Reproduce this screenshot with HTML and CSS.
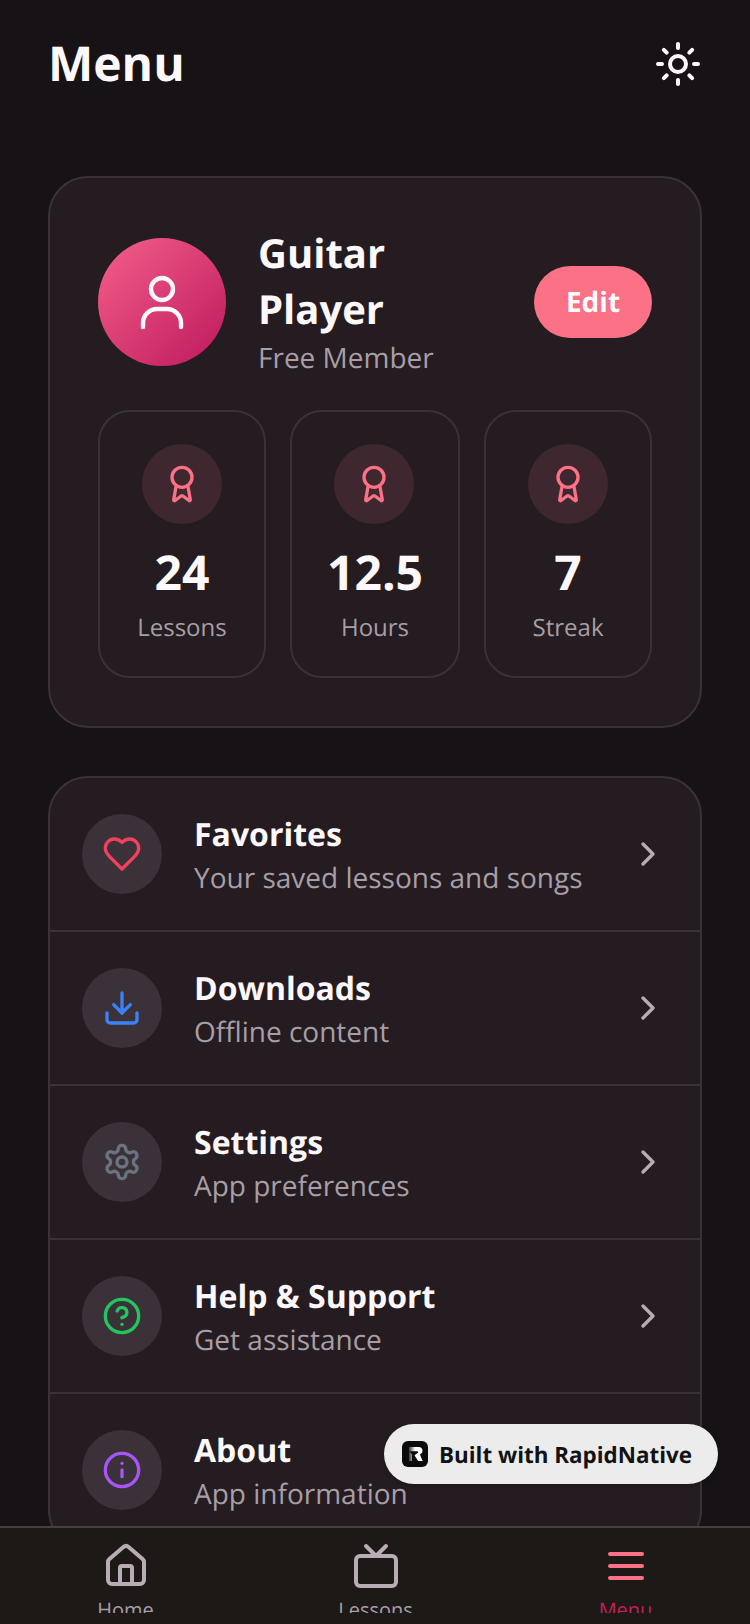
FILE: index.html
```html
<!DOCTYPE html>
<html lang="en">
<head>
<meta charset="utf-8">
<title>Menu</title>
<link rel="stylesheet" href="styles.css">
</head>
<body>
<div class="app">
  <main class="content">
    <header class="header">
      <h1 class="title">Menu</h1>
      <svg class="icon icon-48 white" viewBox="0 0 24 24"><circle cx="12" cy="12" r="4"/><path d="M12 2v2"/><path d="M12 20v2"/><path d="m4.93 4.93 1.41 1.41"/><path d="m17.66 17.66 1.41 1.41"/><path d="M2 12h2"/><path d="M20 12h2"/><path d="m6.34 17.66-1.41 1.41"/><path d="m19.07 4.93-1.41 1.41"/></svg>
    </header>

    <section class="card profile">
      <div class="profile-top">
        <div class="avatar">
          <svg class="avatar-icon" viewBox="0 0 56 56"><circle cx="28" cy="15" r="11"/><path d="M9 53v-4a14 14 0 0 1 14-14h10a14 14 0 0 1 14 14v4"/></svg>
        </div>
        <div class="who">
          <div class="name">Guitar Player</div>
          <div class="plan">Free Member</div>
        </div>
        <div class="edit">Edit</div>
      </div>
      <div class="stats">
        <div class="stat">
          <div class="stat-circle"><svg class="icon icon-40 pink" viewBox="0 0 24 24"><path d="m15.477 12.89 1.515 8.526a.5.5 0 0 1-.81.47l-3.58-2.687a1 1 0 0 0-1.197 0l-3.586 2.686a.5.5 0 0 1-.81-.469l1.514-8.526"/><circle cx="12" cy="8" r="6"/></svg></div>
          <div class="stat-num">24</div>
          <div class="stat-label">Lessons</div>
        </div>
        <div class="stat stat-wide">
          <div class="stat-circle"><svg class="icon icon-40 pink" viewBox="0 0 24 24"><path d="m15.477 12.89 1.515 8.526a.5.5 0 0 1-.81.47l-3.58-2.687a1 1 0 0 0-1.197 0l-3.586 2.686a.5.5 0 0 1-.81-.469l1.514-8.526"/><circle cx="12" cy="8" r="6"/></svg></div>
          <div class="stat-num">12.5</div>
          <div class="stat-label">Hours</div>
        </div>
        <div class="stat">
          <div class="stat-circle"><svg class="icon icon-40 pink" viewBox="0 0 24 24"><path d="m15.477 12.89 1.515 8.526a.5.5 0 0 1-.81.47l-3.58-2.687a1 1 0 0 0-1.197 0l-3.586 2.686a.5.5 0 0 1-.81-.469l1.514-8.526"/><circle cx="12" cy="8" r="6"/></svg></div>
          <div class="stat-num">7</div>
          <div class="stat-label">Streak</div>
        </div>
      </div>
    </section>

    <section class="card list">
      <div class="row">
        <div class="row-circle"><svg class="icon icon-40 rose" viewBox="0 0 24 24"><path d="M19 14c1.49-1.46 3-3.21 3-5.5A5.5 5.5 0 0 0 16.5 3c-1.76 0-3 .5-4.5 2-1.5-1.5-2.74-2-4.5-2A5.5 5.5 0 0 0 2 8.5c0 2.3 1.5 4.05 3 5.5l7 7Z"/></svg></div>
        <div class="row-text"><div class="row-title">Favorites</div><div class="row-sub">Your saved lessons and songs</div></div>
        <svg class="icon icon-40 muted" viewBox="0 0 24 24"><path d="m9 18 6-6-6-6"/></svg>
      </div>
      <div class="row">
        <div class="row-circle"><svg class="icon icon-40 blue" viewBox="0 0 24 24"><path d="M21 15v4a2 2 0 0 1-2 2H5a2 2 0 0 1-2-2v-4"/><path d="m7 10 5 5 5-5"/><path d="M12 15V3"/></svg></div>
        <div class="row-text"><div class="row-title">Downloads</div><div class="row-sub">Offline content</div></div>
        <svg class="icon icon-40 muted" viewBox="0 0 24 24"><path d="m9 18 6-6-6-6"/></svg>
      </div>
      <div class="row">
        <div class="row-circle"><svg class="icon icon-40 gray" viewBox="0 0 24 24"><path d="M12.22 2h-.44a2 2 0 0 0-2 2v.18a2 2 0 0 1-1 1.73l-.43.25a2 2 0 0 1-2 0l-.15-.08a2 2 0 0 0-2.73.73l-.22.38a2 2 0 0 0 .73 2.73l.15.1a2 2 0 0 1 1 1.72v.51a2 2 0 0 1-1 1.74l-.15.09a2 2 0 0 0-.73 2.73l.22.38a2 2 0 0 0 2.73.73l.15-.08a2 2 0 0 1 2 0l.43.25a2 2 0 0 1 1 1.73V20a2 2 0 0 0 2 2h.44a2 2 0 0 0 2-2v-.18a2 2 0 0 1 1-1.73l.43-.25a2 2 0 0 1 2 0l.15.08a2 2 0 0 0 2.73-.73l.22-.39a2 2 0 0 0-.73-2.73l-.15-.08a2 2 0 0 1-1-1.74v-.5a2 2 0 0 1 1-1.74l.15-.09a2 2 0 0 0 .73-2.73l-.22-.38a2 2 0 0 0-2.73-.73l-.15.08a2 2 0 0 1-2 0l-.43-.25a2 2 0 0 1-1-1.73V4a2 2 0 0 0-2-2z"/><circle cx="12" cy="12" r="3"/></svg></div>
        <div class="row-text"><div class="row-title">Settings</div><div class="row-sub">App preferences</div></div>
        <svg class="icon icon-40 muted" viewBox="0 0 24 24"><path d="m9 18 6-6-6-6"/></svg>
      </div>
      <div class="row">
        <div class="row-circle"><svg class="icon icon-40 green" viewBox="0 0 24 24"><circle cx="12" cy="12" r="10"/><path d="M9.09 9a3 3 0 0 1 5.83 1c0 2-3 3-3 3"/><path d="M12 17h.01"/></svg></div>
        <div class="row-text"><div class="row-title">Help &amp; Support</div><div class="row-sub">Get assistance</div></div>
        <svg class="icon icon-40 muted" viewBox="0 0 24 24"><path d="m9 18 6-6-6-6"/></svg>
      </div>
      <div class="row">
        <div class="row-circle"><svg class="icon icon-40 purple" viewBox="0 0 24 24"><circle cx="12" cy="12" r="10"/><path d="M12 16v-4"/><path d="M12 8h.01"/></svg></div>
        <div class="row-text"><div class="row-title">About</div><div class="row-sub">App information</div></div>
        <svg class="icon icon-40 muted" viewBox="0 0 24 24"><path d="m9 18 6-6-6-6"/></svg>
      </div>
    </section>
  </main>

  <nav class="tabs">
    <div class="tab">
      <svg class="icon icon-48 muted" viewBox="0 0 24 24"><path d="M15 21v-8a1 1 0 0 0-1-1h-4a1 1 0 0 0-1 1v8"/><path d="M3 10a2 2 0 0 1 .709-1.528l7-5.999a2 2 0 0 1 2.582 0l7 5.999A2 2 0 0 1 21 10v9a2 2 0 0 1-2 2H5a2 2 0 0 1-2-2z"/></svg>
      <div class="tab-label">Home</div>
    </div>
    <div class="tab">
      <svg class="icon icon-48 muted" viewBox="0 0 24 24"><rect x="2" y="7" width="20" height="15" rx="2"/><path d="m17 2-5 5-5-5"/></svg>
      <div class="tab-label">Lessons</div>
    </div>
    <div class="tab">
      <svg class="icon icon-48 pink" viewBox="0 0 24 24"><path d="M4 6h16"/><path d="M4 12h16"/><path d="M4 18h16"/></svg>
      <div class="tab-label active">Menu</div>
    </div>
  </nav>

  <div class="badge">
    <svg class="badge-logo" viewBox="0 0 26 26">
      <defs><linearGradient id="logo-fade" x1="0" y1="0" x2="1" y2="0"><stop offset="0" stop-color="#3a3a3c"/><stop offset="0.45" stop-color="#fff"/></linearGradient></defs>
      <rect width="26" height="26" rx="6" fill="#0b0b0c"/>
      <path d="M7 6h9.5c2.6 0 4 1.6 4 3.8 0 1.8-1 3-2.6 3.6l2.8 6.6h-4.6l-3.6-5.8 3.2-2.2c.8-.6.6-1.8-.6-1.8H7l3 3v6.8H7z" fill="url(#logo-fade)"/>
    </svg>
    <span class="badge-text">Built with RapidNative</span>
  </div>
</div>
</body>
</html>
```

FILE: styles.css
```css
* {
  box-sizing: border-box;
}

html,
body {
  margin: 0;
  padding: 0;
}

body {
  font-family: "Open Sans", "Noto Sans", sans-serif;
  background: #171216;
  color: #fff;
  text-rendering: geometricPrecision;
}

.app {
  position: relative;
  width: 750px;
  height: 1624px;
  display: flex;
  flex-direction: column;
  overflow: hidden;
}

.content {
  flex: 1;
  min-height: 0;
  overflow: hidden;
  padding: 0 48px;
}

.header {
  height: 128px;
  display: flex;
  justify-content: space-between;
  align-items: center;
}

.title {
  margin: 0;
  font-size: 48px;
  line-height: 64px;
  font-weight: 700;
  color: #fdf8fb;
}

.icon {
  display: block;
  flex: none;
  fill: none;
  stroke: currentColor;
  stroke-width: 2;
  stroke-linecap: round;
  stroke-linejoin: round;
}

.icon-48 {
  width: 48px;
  height: 48px;
}

.icon-40 {
  width: 40px;
  height: 40px;
}

.white {
  color: #fdf8fb;
}

.pink {
  color: #fb7185;
}

.rose {
  color: #f43f5e;
}

.blue {
  color: #3b82f6;
}

.gray {
  color: #6b7280;
}

.green {
  color: #22c55e;
}

.purple {
  color: #a855f7;
}

.muted {
  color: #b8adb5;
}

.card {
  background: #241c21;
  border: 2px solid #3a3238;
  border-radius: 40px;
}

.profile {
  margin-top: 48px;
  padding: 48px;
  height: 552px;
}

.profile-top {
  display: flex;
  align-items: center;
  margin-bottom: 32px;
}

.avatar {
  width: 128px;
  height: 128px;
  flex: none;
  border-radius: 50%;
  background: linear-gradient(135deg, #f4608a, #be185d);
  display: flex;
  align-items: center;
  justify-content: center;
}

.avatar-icon {
  width: 56px;
  height: 56px;
  fill: none;
  stroke: #fdf8fb;
  stroke-width: 4.4;
  stroke-linecap: round;
  stroke-linejoin: round;
}

.who {
  flex: 1;
  min-width: 0;
  margin: -1px 0 -1px 32px;
  padding-right: 80px;
}

.name {
  font-size: 40px;
  line-height: 56px;
  font-weight: 700;
  color: #fdf8fb;
}

.plan {
  font-size: 28px;
  line-height: 42px;
  color: #a89ea6;
}

.edit {
  flex: none;
  width: 118px;
  height: 72px;
  border-radius: 36px;
  background: #fb7185;
  color: #fff;
  font-size: 28px;
  font-weight: 700;
  display: flex;
  align-items: center;
  justify-content: center;
}

.stats {
  display: flex;
  gap: 24px;
}

.stat {
  flex: 1 1 0;
  height: 268px;
  padding-top: 32px;
  border: 2px solid #3a3238;
  border-radius: 32px;
  display: flex;
  flex-direction: column;
  align-items: center;
}

.stat-wide {
  flex-grow: 1.014;
}

.stat-circle {
  width: 80px;
  height: 80px;
  border-radius: 50%;
  background: #3f272f;
  display: flex;
  align-items: center;
  justify-content: center;
}

.stat-wide .stat-circle {
  margin-right: 2px;
}

.stat-num {
  margin-top: 17px;
  font-size: 48px;
  line-height: 64px;
  font-weight: 700;
  color: #fdf8fb;
}

.stat-label {
  margin-top: 5px;
  font-size: 24px;
  line-height: 36px;
  color: #a89ea6;
}

.list {
  margin-top: 48px;
  overflow: hidden;
}

.row {
  height: 154px;
  padding: 0 32px;
  display: flex;
  align-items: center;
  border-bottom: 2px solid #3a3238;
}

.row-circle {
  width: 80px;
  height: 80px;
  flex: none;
  border-radius: 50%;
  background: #3b3239;
  display: flex;
  align-items: center;
  justify-content: center;
}

.row-text {
  flex: 1;
  min-width: 0;
  margin-left: 32px;
  padding-top: 2px;
}

.row-title {
  font-size: 32px;
  line-height: 46px;
  font-weight: 700;
  color: #fdf8fb;
}

.row-sub {
  font-size: 28px;
  line-height: 40px;
  color: #a89ea6;
}

.tabs {
  height: 98px;
  flex: none;
  display: flex;
  background: #1c1917;
  border-top: 2px solid #44403c;
  padding: 14px 0 0 0.5px;
}

.tab {
  flex: 0 0 250px;
  height: 71px;
  overflow: hidden;
  display: flex;
  flex-direction: column;
  align-items: center;
}

.tab-label {
  margin-top: 6px;
  font-size: 20px;
  line-height: 28px;
  color: #a89ea6;
}

.tab-label.active {
  color: #c41e56;
}

.badge {
  position: absolute;
  left: 384px;
  top: 1424px;
  width: 334px;
  height: 60px;
  border-radius: 30px;
  background: #ececec;
  box-shadow: 0 2px 4px rgba(0, 0, 0, 0.2);
  display: flex;
  align-items: center;
  padding-left: 18px;
  gap: 11px;
}

.badge-logo {
  width: 26px;
  height: 26px;
  flex: none;
}

.badge-text {
  font-size: 22.4px;
  font-weight: 700;
  color: #121214;
  white-space: nowrap;
}
```
